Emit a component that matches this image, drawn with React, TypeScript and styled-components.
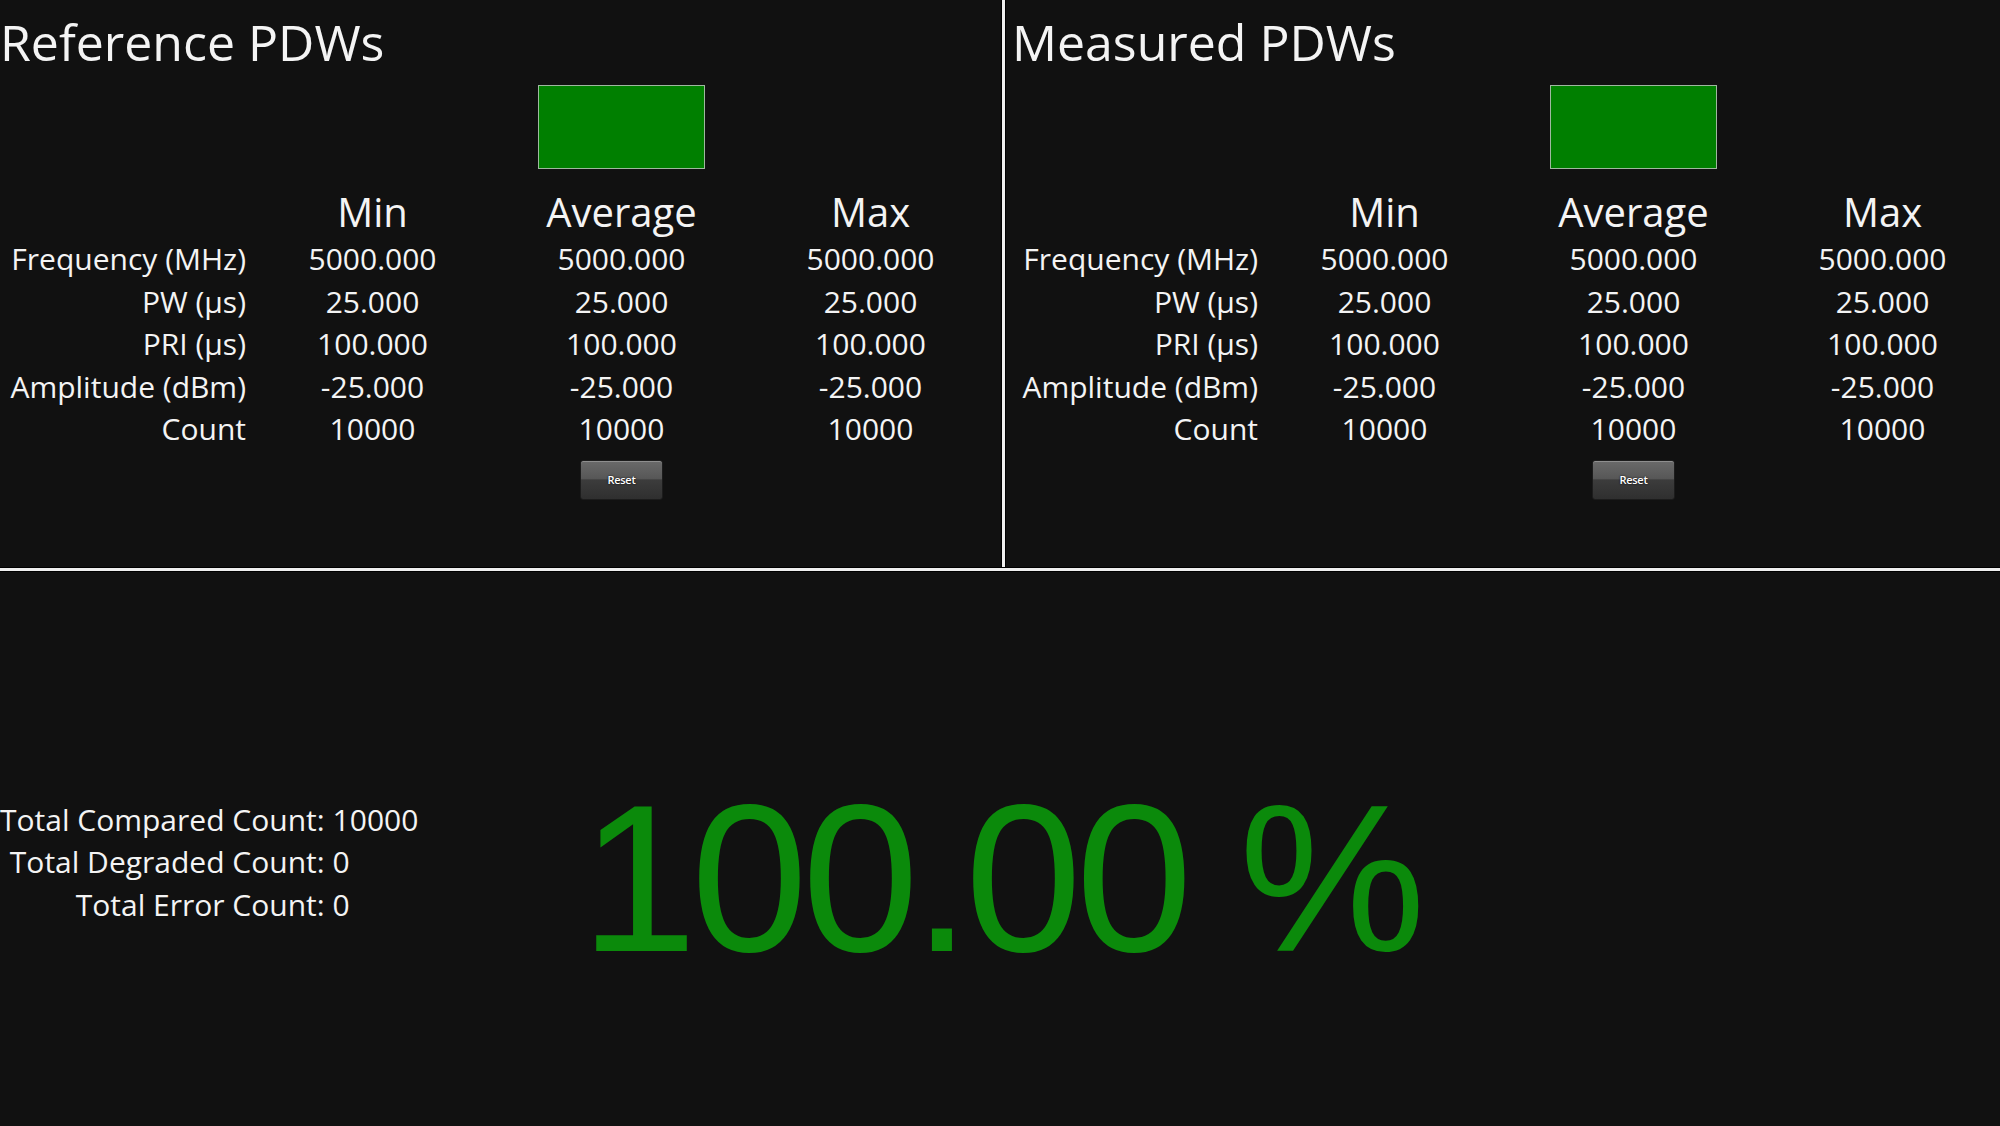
import React from 'react'
import styled, { createGlobalStyle } from 'styled-components'

const GlobalStyle = createGlobalStyle`
  html, body {
    margin: 0;
    padding: 0;
    background: #111111;
    overflow: hidden;
  }
  body {
    font-family: 'Segoe UI', 'Open Sans', 'Noto Sans', sans-serif;
    color: #f4f4f4;
  }
`

const Screen = styled.div`
  width: 2000px;
  height: 1126px;
  display: flex;
  flex-direction: column;
  background: #111111;
  overflow: hidden;
`

const TopRow = styled.div`
  height: 567px;
  display: grid;
  grid-template-columns: 1000px 12px 1fr;
  overflow: hidden;
`

const VDivider = styled.div`
  width: 3px;
  margin-left: 2px;
  background: #efefef;
  box-shadow: 0 0 0 1px #000;
`

const HDivider = styled.div`
  height: 3px;
  margin: 1px 0;
  background: #efefef;
  box-shadow: 0 0 0 1px #000;
`

const Panel = styled.section`
  display: flex;
  flex-direction: column;
  overflow: hidden;
  min-width: 0;
`

const Title = styled.h1`
  margin: 0;
  font-size: 50px;
  font-weight: 400;
  line-height: 84px;
  white-space: nowrap;
`

const Table = styled.div`
  display: grid;
  grid-template-columns: 248px repeat(3, 249px);
  width: 995px;
`

const StatusBox = styled.div<{ $ok: boolean }>`
  grid-column: 3;
  justify-self: center;
  width: 167px;
  height: 84px;
  box-sizing: border-box;
  margin: 1px 0 16px;
  background: ${({ $ok }) => ($ok ? '#007f00' : '#b00000')};
  border: 1px solid #9fb89f;
`

const Head = styled.div`
  font-size: 40px;
  line-height: 53px;
  text-align: center;
`

const Label = styled.div`
  font-size: 30px;
  line-height: 42.5px;
  text-align: right;
  padding-right: 2px;
  white-space: nowrap;
`

const Cell = styled.div`
  font-size: 30px;
  line-height: 42.5px;
  text-align: center;
`

const ResetButton = styled.button`
  grid-column: 3;
  justify-self: center;
  margin-top: 9px;
  width: 83px;
  height: 40px;
  padding: 0;
  border: 1px solid #1c1c1c;
  border-radius: 3px;
  background: linear-gradient(
    to bottom,
    #6a6a6a 0%,
    #575757 46%,
    #3c3c3c 50%,
    #2f2f2f 100%
  );
  box-shadow: inset 0 1px 0 rgba(255, 255, 255, 0.25);
  color: #ffffff;
  font-family: 'Segoe UI', 'Open Sans', sans-serif;
  font-size: 11px;
  font-weight: 600;
  letter-spacing: -0.3px;
  text-shadow: 0 0 2px #000;
`

const Bottom = styled.div`
  flex: 1;
  display: flex;
  flex-direction: column;
  justify-content: center;
  padding-top: 59px;
`

const BottomRow = styled.div`
  display: grid;
  grid-template-columns: 1fr auto 1fr;
  align-items: center;
`

const Stats = styled.div`
  display: grid;
  grid-template-columns: auto auto;
  column-gap: 8px;
  justify-self: start;
  margin-bottom: 32px;
  font-size: 30px;
  line-height: 42.5px;
`

const StatLabel = styled.span`
  text-align: right;
  white-space: nowrap;
`

const StatValue = styled.span`
  text-align: left;
`

const Percent = styled.div`
  font-family: 'Liberation Sans', Arial, sans-serif;
  font-size: 210px;
  letter-spacing: -6px;
  color: #0b8a0b;
  white-space: nowrap;
`

type Row = { label: string; min: string; avg: string; max: string }

const rows: Row[] = [
  { label: 'Frequency (MHz)', min: '5000.000', avg: '5000.000', max: '5000.000' },
  { label: 'PW (µs)', min: '25.000', avg: '25.000', max: '25.000' },
  { label: 'PRI (µs)', min: '100.000', avg: '100.000', max: '100.000' },
  { label: 'Amplitude (dBm)', min: '-25.000', avg: '-25.000', max: '-25.000' },
  { label: 'Count', min: '10000', avg: '10000', max: '10000' },
]

const PdwPanel: React.FC<{ title: string }> = ({ title }) => (
  <Panel>
    <Title>{title}</Title>
    <Table>
      <StatusBox $ok />
      <div />
      <Label />
      <Head>Min</Head>
      <Head>Average</Head>
      <Head>Max</Head>
      {rows.map((r) => (
        <React.Fragment key={r.label}>
          <Label>{r.label}</Label>
          <Cell>{r.min}</Cell>
          <Cell>{r.avg}</Cell>
          <Cell>{r.max}</Cell>
        </React.Fragment>
      ))}
      <ResetButton type="button">Reset</ResetButton>
    </Table>
  </Panel>
)

const stats = [
  { label: 'Total Compared Count:', value: '10000' },
  { label: 'Total Degraded Count:', value: '0' },
  { label: 'Total Error Count:', value: '0' },
]

const App: React.FC = () => (
  <>
    <GlobalStyle />
    <Screen>
      <TopRow>
        <PdwPanel title="Reference PDWs" />
        <VDivider />
        <PdwPanel title="Measured PDWs" />
      </TopRow>
      <HDivider />
      <Bottom>
        <BottomRow>
          <Stats>
            {stats.map((s) => (
              <React.Fragment key={s.label}>
                <StatLabel>{s.label}</StatLabel>
                <StatValue>{s.value}</StatValue>
              </React.Fragment>
            ))}
          </Stats>
          <Percent>100.00 %</Percent>
          <div />
        </BottomRow>
      </Bottom>
    </Screen>
  </>
)

export default App
